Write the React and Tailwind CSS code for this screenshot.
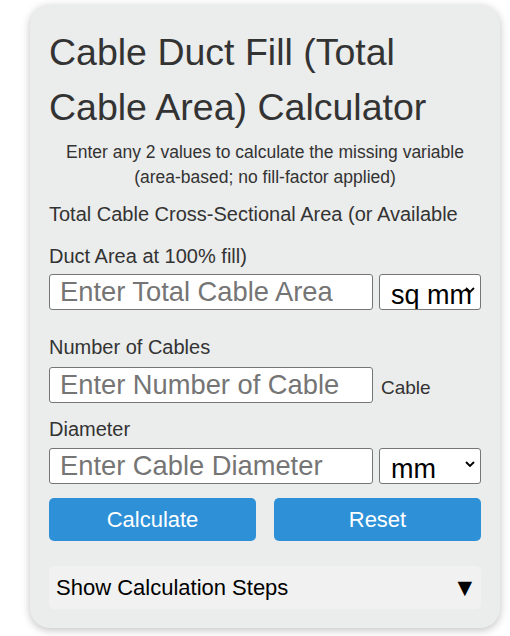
import { useState } from "react";

function Chevron() {
  return (
    <svg
      width="10"
      height="6"
      viewBox="0 0 10 6"
      className="pointer-events-none absolute right-[6px] top-[13px]"
    >
      <path d="M1 1 L5 5 L9 1" fill="none" stroke="#000" strokeWidth="1.8" />
    </svg>
  );
}

function UnitSelect({ value, options, onChange }) {
  return (
    <div className="relative h-[36px] w-[102px] shrink-0">
      <select
        value={value}
        onChange={(e) => onChange(e.target.value)}
        className="h-full w-full appearance-none rounded-[3px] border border-[#767676] bg-white pl-[11px] text-[27px] text-black outline-none"
      >
        {options.map((o) => (
          <option key={o}>{o}</option>
        ))}
      </select>
      <Chevron />
    </div>
  );
}

const inputCls =
  "h-[36px] w-[324px] shrink-0 rounded-[3px] border border-[#767676] bg-white pl-[10px] text-[27.3px] text-black outline-none placeholder:text-[#757575]";

export default function App() {
  const [area, setArea] = useState("");
  const [count, setCount] = useState("");
  const [diameter, setDiameter] = useState("");
  const [areaUnit, setAreaUnit] = useState("sq mm");
  const [diaUnit, setDiaUnit] = useState("mm");
  const [open, setOpen] = useState(false);

  function reset() {
    setArea("");
    setCount("");
    setDiameter("");
  }

  return (
    <div className="min-h-screen bg-white pt-[5px] font-['Liberation_Sans',Arial,sans-serif]">
      <div className="ml-[30px] w-[470px] rounded-[20px] bg-[#ebecec] px-[19px] pt-[20px] pb-[19px] text-[#333] shadow-[0_2px_8px_rgba(0,0,0,0.25)]">
        <h1 className="text-[37.5px] leading-[55px]">
          Cable Duct Fill (Total Cable Area) Calculator
        </h1>
        <p className="mt-[5px] text-center text-[17.5px] leading-[25px]">
          Enter any 2 values to calculate the missing variable
          <br />
          (area-based; no fill-factor applied)
        </p>

        <label className="mt-[3px] block text-[20px] leading-[42px]">
          Total Cable Cross-Sectional Area (or Available Duct Area at 100% fill)
        </label>
        <div className="mt-[-3px] flex gap-[6px]">
          <input
            className={inputCls}
            placeholder="Enter Total Cable Area"
            value={area}
            onChange={(e) => setArea(e.target.value)}
          />
          <UnitSelect
            value={areaUnit}
            options={["sq mm", "sq in", "sq cm"]}
            onChange={setAreaUnit}
          />
        </div>

        <label className="mt-[25px] block text-[20px] leading-[24px]">
          Number of Cables
        </label>
        <div className="mt-[8px] flex">
          <input
            className={inputCls}
            placeholder="Enter Number of Cable"
            value={count}
            onChange={(e) => setCount(e.target.value)}
          />
          <span className="ml-[8px] mt-[9px] text-[19px] leading-[24px]">Cable</span>
        </div>
        <label className="mt-[14px] block text-[20px] leading-[24px]">Diameter</label>
        <div className="mt-[7px] flex gap-[6px]">
          <input
            className={inputCls}
            placeholder="Enter Cable Diameter"
            value={diameter}
            onChange={(e) => setDiameter(e.target.value)}
          />
          <UnitSelect value={diaUnit} options={["mm", "in"]} onChange={setDiaUnit} />
        </div>

        <div className="mt-[14px] grid grid-cols-2 gap-[18px]">
          <button className="h-[43px] rounded-[5px] bg-[#2e91d8] text-[22px] text-white">
            Calculate
          </button>
          <button
            onClick={reset}
            className="h-[43px] rounded-[5px] bg-[#2e91d8] text-[22px] text-white"
          >
            Reset
          </button>
        </div>

        <button
          onClick={() => setOpen(!open)}
          className="mt-[25px] flex h-[43px] w-full items-center justify-between rounded-[5px] bg-[#f1f1f1] pl-[7px] pr-[9px] text-[22px] text-black"
        >
          <span>Show Calculation Steps</span>
          <span className="font-['DejaVu_Sans',sans-serif] text-[19px]">▼</span>
        </button>
      </div>
    </div>
  );
}
